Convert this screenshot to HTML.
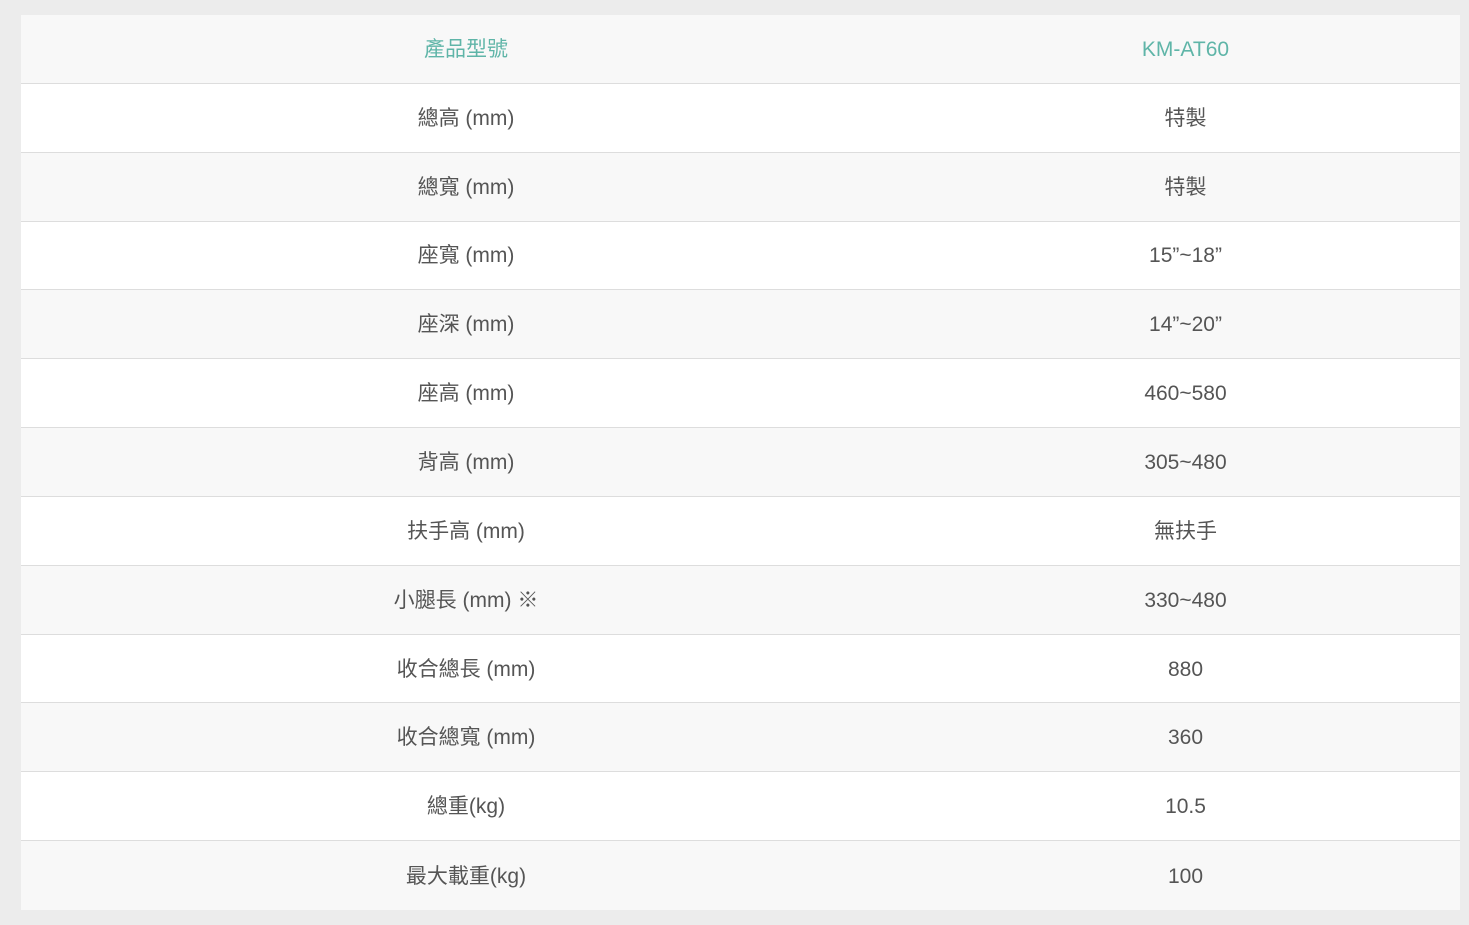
<!DOCTYPE html>
<html><head><meta charset="utf-8"><style>
html,body{margin:0;padding:0;background:#ececec;width:1469px;height:925px;overflow:hidden}
.t{position:absolute;left:21px;top:15px;width:1439px;font-family:"Liberation Sans","Noto Sans CJK TC",sans-serif;font-size:21px;color:#555}
.r{display:flex;height:68.85px;box-sizing:border-box;border-bottom:1px solid #ddd;background:#fff}
.r:nth-child(odd){background:#f8f8f8}
.r:last-child{border-bottom:none}
.r div{display:flex;align-items:center;justify-content:center;line-height:24px;padding-top:2px;box-sizing:border-box}
.r div:first-child{width:890px}
.r div:last-child{width:549px}
.h{color:#5fb5a8}
</style></head><body>
<div class="t">
<div class="r h"><div>產品型號</div><div>KM-AT60</div></div>
<div class="r"><div>總高 (mm)</div><div>特製</div></div>
<div class="r"><div>總寬 (mm)</div><div>特製</div></div>
<div class="r"><div>座寬 (mm)</div><div>15”~18”</div></div>
<div class="r"><div>座深 (mm)</div><div>14”~20”</div></div>
<div class="r"><div>座高 (mm)</div><div>460~580</div></div>
<div class="r"><div>背高 (mm)</div><div>305~480</div></div>
<div class="r"><div>扶手高 (mm)</div><div>無扶手</div></div>
<div class="r"><div>小腿長 (mm) ※</div><div>330~480</div></div>
<div class="r"><div>收合總長 (mm)</div><div>880</div></div>
<div class="r"><div>收合總寬 (mm)</div><div>360</div></div>
<div class="r"><div>總重(kg)</div><div>10.5</div></div>
<div class="r"><div>最大載重(kg)</div><div>100</div></div>
</div>
</body></html>
